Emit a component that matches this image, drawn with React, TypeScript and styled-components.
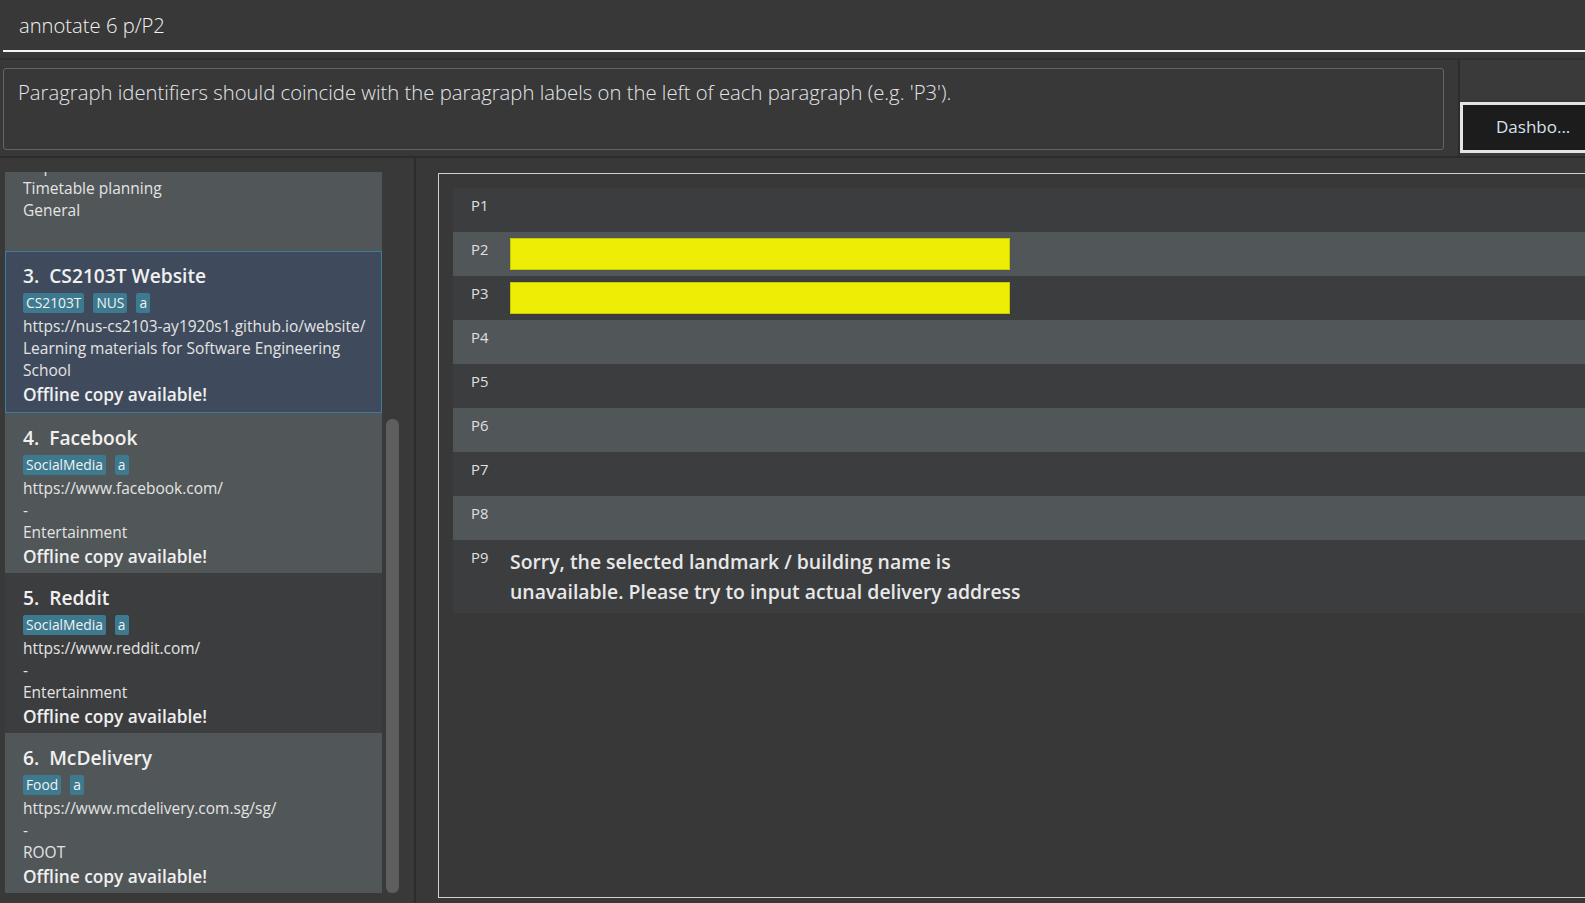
import React from "react";
import styled, { createGlobalStyle } from "styled-components";

const Global = createGlobalStyle`
  html, body { margin: 0; padding: 0; background: #383838; }
  body { font-family: "Open Sans", "Noto Sans", sans-serif; color: #e6e6e6; }
  * { box-sizing: border-box; }
`;

const Page = styled.div`
  width: 1585px;
  height: 903px;
  display: flex;
  flex-direction: column;
  background: #383838;
  overflow: hidden;
`;

const CommandSection = styled.div`
  height: 60px;
  padding: 0 0 0 3px;
  border-bottom: 2px solid #2f2f2f;
  flex-shrink: 0;
`;

const CommandInput = styled.div`
  height: 52px;
  border-bottom: 2px solid #f4f4f4;
  padding: 11px 0 0 16px;
  font-size: 20.2px;
  font-weight: 300;
  color: #f2f2f2;
`;

const TopRow = styled.div`
  height: 98px;
  display: flex;
  flex-shrink: 0;
  border-bottom: 2px solid #2c2c2c;
`;

const ResultBox = styled.div`
  flex: 1;
  margin: 8px 14px 6px 3px;
  border: 1px solid #646464;
  border-radius: 3px;
  background: #383838;
  padding: 9px 14px;
  font-size: 20.3px;
  font-weight: 300;
  color: #e2e6ea;
`;

const VDivider = styled.div`
  width: 2px;
  background: #2c2c2c;
  flex-shrink: 0;
`;

const DashArea = styled.div`
  width: 125px;
  padding: 42px 0 0 0;
  background: #3a3a3a;
  overflow: hidden;
`;

const DashButton = styled.div`
  width: 160px;
  height: 51px;
  border: 3px solid #e4e4e4;
  border-right: none;
  background: #1c1c1c;
  color: #d8e2ea;
  font-size: 17px;
  padding: 10px 0 0 33px;
`;

const Main = styled.div`
  flex: 1;
  display: flex;
  min-height: 0;
`;

const ListPanel = styled.div`
  width: 414px;
  flex-shrink: 0;
  background: #393939;
  padding: 14px 0 0 5px;
  display: flex;
  gap: 4px;
`;

const ListViewport = styled.div`
  width: 377px;
  height: 722px;
  overflow: hidden;
`;

const ListContent = styled.div<{ $scroll: number }>`
  margin-top: ${(p) => -p.$scroll}px;
  display: flex;
  flex-direction: column;
`;

const Card = styled.div<{ $tone: "light" | "dark" | "sel" }>`
  height: ${(p) => (p.$tone === "sel" ? 162 : 160)}px;
  padding: ${(p) => (p.$tone === "sel" ? "11px 18px 1px 17px" : "12px 18px 2px 18px")};
  display: flex;
  flex-direction: column;
  overflow: hidden;
  background: ${(p) =>
    p.$tone === "light" ? "#515658" : p.$tone === "dark" ? "#3c3d3f" : "#3f4b5d"};
  border: ${(p) => (p.$tone === "sel" ? "1px solid #3b7c9c" : "none")};
`;

const CardTitle = styled.div`
  font-size: 19.2px;
  font-weight: 600;
  color: #f0f0f0;
  line-height: 26px;
  white-space: pre;
`;

const Tags = styled.div`
  display: flex;
  gap: 9px;
  margin: 4px 0 2px 0;
`;

const Tag = styled.span`
  background: #3d7a8f;
  color: #f2f2f2;
  font-size: 13.8px;
  line-height: 20px;
  height: 20px;
  padding: 0 3px;
  border-radius: 2px;
`;

const Line = styled.div`
  font-size: 15.5px;
  line-height: 22px;
  color: #e4e4e4;
  white-space: nowrap;
`;

const Offline = styled.div`
  font-size: 17.3px;
  font-weight: 600;
  line-height: 28px;
  color: #f0f0f0;
`;

const ScrollTrack = styled.div`
  width: 13px;
  padding-top: 247px;
`;

const ScrollThumb = styled.div`
  width: 13px;
  height: 474px;
  border-radius: 6px;
  background: #5e5e5e;
`;

const ParaArea = styled.div`
  flex: 1;
  padding: 15px 0 5px 22px;
  overflow: hidden;
  background: #383838;
`;

const ParaFrame = styled.div`
  width: 1300px;
  height: 100%;
  border: 1.5px solid #cfcfcf;
  border-right: none;
  padding: 14px 0 0 14px;
`;

const ParaRow = styled.div<{ $light: boolean }>`
  display: flex;
  min-height: 44px;
  padding: 6px 0;
  background: ${(p) => (p.$light ? "#515658" : "#3c3d3f")};
`;

const ParaLabel = styled.div`
  width: 57px;
  padding: 1px 0 0 18px;
  font-size: 14.8px;
  color: #e0e0e0;
  flex-shrink: 0;
`;

const Highlight = styled.div`
  width: 500px;
  height: 32px;
  background: #eded05;
  border: 1px solid #c9c900;
`;

const ParaText = styled.div`
  font-size: 19.4px;
  font-weight: 600;
  line-height: 30px;
  color: #e8e8e8;
  padding: 1px 0 0 0;
`;

type CardData = {
  idx: number;
  title: string;
  tags: string[];
  url: string;
  lines: string[];
  offline: boolean;
  tone: "light" | "dark" | "sel";
};

const cards: CardData[] = [
  {
    idx: 2,
    title: "NUSMods",
    tags: ["NUS", "a"],
    url: "https://nusmods.com/",
    lines: ["Timetable planning", "General"],
    offline: false,
    tone: "light",
  },
  {
    idx: 3,
    title: "CS2103T Website",
    tags: ["CS2103T", "NUS", "a"],
    url: "https://nus-cs2103-ay1920s1.github.io/website/",
    lines: ["Learning materials for Software Engineering", "School"],
    offline: true,
    tone: "sel",
  },
  {
    idx: 4,
    title: "Facebook",
    tags: ["SocialMedia", "a"],
    url: "https://www.facebook.com/",
    lines: ["-", "Entertainment"],
    offline: true,
    tone: "light",
  },
  {
    idx: 5,
    title: "Reddit",
    tags: ["SocialMedia", "a"],
    url: "https://www.reddit.com/",
    lines: ["-", "Entertainment"],
    offline: true,
    tone: "dark",
  },
  {
    idx: 6,
    title: "McDelivery",
    tags: ["Food", "a"],
    url: "https://www.mcdelivery.com.sg/sg/",
    lines: ["-", "ROOT"],
    offline: true,
    tone: "light",
  },
];

const paragraphs: { label: string; kind: "empty" | "hl" | "text" }[] = [
  { label: "P1", kind: "empty" },
  { label: "P2", kind: "hl" },
  { label: "P3", kind: "hl" },
  { label: "P4", kind: "empty" },
  { label: "P5", kind: "empty" },
  { label: "P6", kind: "empty" },
  { label: "P7", kind: "empty" },
  { label: "P8", kind: "empty" },
  { label: "P9", kind: "text" },
];

export default function App() {
  return (
    <Page>
      <Global />
      <CommandSection>
        <CommandInput>annotate 6 p/P2</CommandInput>
      </CommandSection>
      <TopRow>
        <ResultBox>
          Paragraph identifiers should coincide with the paragraph labels on the left of each paragraph (e.g. 'P3').
        </ResultBox>
        <VDivider />
        <DashArea>
          <DashButton>Dashbo...</DashButton>
        </DashArea>
      </TopRow>
      <Main>
        <ListPanel>
          <ListViewport>
            <ListContent $scroll={81}>
              {cards.map((c) => (
                <Card key={c.idx} $tone={c.tone}>
                  <CardTitle>{`${c.idx}.  ${c.title}`}</CardTitle>
                  <Tags>
                    {c.tags.map((t) => (
                      <Tag key={t}>{t}</Tag>
                    ))}
                  </Tags>
                  <Line>{c.url}</Line>
                  {c.lines.map((l, i) => (
                    <Line key={i}>{l}</Line>
                  ))}
                  {c.offline && <Offline>Offline copy available!</Offline>}
                </Card>
              ))}
            </ListContent>
          </ListViewport>
          <ScrollTrack>
            <ScrollThumb />
          </ScrollTrack>
        </ListPanel>
        <VDivider />
        <ParaArea>
          <ParaFrame>
            {paragraphs.map((p, i) => (
              <ParaRow key={p.label} $light={i % 2 === 1}>
                <ParaLabel>{p.label}</ParaLabel>
                {p.kind === "hl" && <Highlight />}
                {p.kind === "text" && (
                  <ParaText>
                    Sorry, the selected landmark / building name is
                    <br />
                    unavailable. Please try to input actual delivery address
                  </ParaText>
                )}
              </ParaRow>
            ))}
          </ParaFrame>
        </ParaArea>
      </Main>
    </Page>
  );
}
